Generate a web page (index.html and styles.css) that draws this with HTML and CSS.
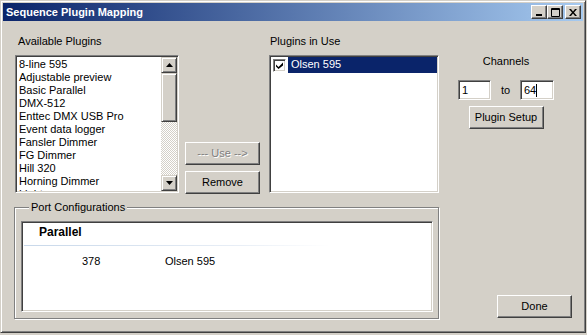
FILE: index.html
```html
<!doctype html>
<html>
<head>
    <title>Sequence Plugin Mapping</title>
    <meta charset="utf-8">
    <link rel="stylesheet" href="styles.css">
</head><body>
<div class="window">
    <div class="titlebar">
        <span class="title">Sequence Plugin Mapping</span>
        <div class="caption-buttons">
            <span class="cap-btn"><svg width="8" height="7" viewBox="0 0 8 7"><rect x="1" y="5" width="6" height="2" fill="#000"/></svg></span>
            <span class="cap-btn"><svg width="9" height="9" viewBox="0 0 9 9"><path d="M0.5 0.5h8v8h-8z M0.5 1.5h8" fill="none" stroke="#000"/></svg></span>
            <span class="cap-btn close"><svg width="8" height="7" viewBox="0 0 8 7"><path d="M0 0h2l2 2.5 2-2.5h2l-3 3.5 3 3.5h-2l-2-2.5-2 2.5h-2l3-3.5z" fill="#000"/></svg></span>
        </div>
    </div>

    <div class="client">
        <div class="top-row">
            <div class="col col-available">
                <div class="label">Available Plugins</div>
                <div class="listbox">
                    <ul class="items">
                        <li>8-line 595</li>
                        <li>Adjustable preview</li>
                        <li>Basic Parallel</li>
                        <li>DMX-512</li>
                        <li>Enttec DMX USB Pro</li>
                        <li>Event data logger</li>
                        <li>Fansler Dimmer</li>
                        <li>FG Dimmer</li>
                        <li>Hill 320</li>
                        <li>Horning Dimmer</li>
                        <li>Lightorama</li>
                    </ul>
                    <div class="vscroll">
                        <span class="sb-btn"><svg width="7" height="4" viewBox="0 0 7 4"><path d="M3.5 0L7 4H0z" fill="#000"/></svg></span>
                        <div class="sb-track"><span class="sb-thumb"></span></div>
                        <span class="sb-btn"><svg width="7" height="4" viewBox="0 0 7 4"><path d="M0 0h7L3.5 4z" fill="#000"/></svg></span>
                    </div>
                </div>
            </div>

            <div class="col col-actions">
                <button class="btn" disabled>--- Use --&gt;</button>
                <button class="btn">Remove</button>
            </div>

            <div class="col col-inuse">
                <div class="label">Plugins in Use</div>
                <div class="listbox">
                    <ul class="items checked-items">
                        <li class="check-row">
                            <span class="checkbox"><svg width="7" height="7" viewBox="0 0 7 7"><path d="M0 2.5L2.5 5 7 0.5V3.5L2.5 7 0 4.5z" fill="#000"/></svg></span>
                            <span class="check-text selected">Olsen 595</span>
                        </li>
                    </ul>
                </div>
            </div>

            <div class="col col-channels">
                <div class="label">Channels</div>
                <div class="range">
                    <span class="field">1</span>
                    <span class="to">to</span>
                    <span class="field">64<span class="caret"></span></span>
                </div>
                <button class="btn">Plugin Setup</button>
            </div>
        </div>

        <div class="bottom-row">
            <fieldset class="group">
                <legend>Port Configurations</legend>
                <div class="portlist">
                    <div class="group-head">Parallel</div>
                    <div class="group-line"></div>
                    <div class="port-row">
                        <span class="port-addr">378</span>
                        <span class="port-name">Olsen 595</span>
                    </div>
                </div>
            </fieldset>
            <button class="btn done">Done</button>
        </div>
    </div>
</div>
</body></html>
```

FILE: styles.css
```css
body {
    margin: 0;
    background: #d4d0c8;
    font: 11px/13px 'Liberation Sans', Arial, sans-serif;
    color: #000;
}

.window {
    box-sizing: border-box;
    width: 586px;
    height: 333px;
    padding: 1px;
    background: #d4d0c8;
    border: 1px solid;
    border-color: #d4d0c8 #404040 #404040 #d4d0c8;
    box-shadow: inset 1px 1px 0 #fff, inset -1px -1px 0 #808080;
    display: flex;
    flex-direction: column;
}

.titlebar {
    height: 18px;
    margin: 1px 1px 0 1px;
    display: flex;
    align-items: center;
    justify-content: space-between;
    padding: 0 2px 0 3px;
    background: linear-gradient(to right, #0a246a, #a6caf0);
}

.title {
    color: #fff;
    font-weight: bold;
    font-size: 11px;
    padding-top: 1px;
}

.caption-buttons {
    display: flex;
}

.cap-btn {
    box-sizing: border-box;
    width: 16px;
    height: 14px;
    display: flex;
    align-items: center;
    justify-content: center;
    background: #d4d0c8;
    border: 1px solid;
    border-color: #fff #404040 #404040 #fff;
    box-shadow: inset -1px -1px 0 #808080;
}

.cap-btn.close {
    margin-left: 2px;
}

.client {
    flex: 1;
    padding: 14px 12px 0 12px;
}

.top-row {
    display: flex;
    padding-left: 1px;
    height: 158px;
}

.col-available {
    width: 164px;
}

.col-actions {
    width: 75px;
    margin-left: 6px;
    display: flex;
    flex-direction: column;
    justify-content: flex-end;
    gap: 6px;
    margin-bottom: -1px;
}

.col-inuse {
    width: 170px;
    margin-left: 9px;
}

.col-channels {
    width: 96px;
    margin-left: 19px;
    padding-top: 20px;
    display: flex;
    flex-direction: column;
    align-items: center;
}

.label {
    height: 13px;
    margin: 0 0 7px 3px;
}

.col-inuse .label {
    margin-left: 1px;
}

.col-channels .label {
    margin: 0 0 12px 0;
}

.listbox {
    box-sizing: border-box;
    height: 138px;
    display: flex;
    background: #fff;
    border: 1px solid;
    border-color: #808080 #fff #fff #808080;
    box-shadow: inset 1px 1px 0 #404040, inset -1px -1px 0 #d4d0c8;
    padding: 1px;
    overflow: hidden;
}

.items {
    flex: 1;
    list-style: none;
    margin: 0;
    padding: 1px 0 0 2px;
    overflow: hidden;
}

.items li {
    height: 13px;
    white-space: nowrap;
}

.vscroll {
    width: 16px;
    display: flex;
    flex-direction: column;
}

.sb-btn,
.sb-thumb {
    box-sizing: border-box;
    display: flex;
    align-items: center;
    justify-content: center;
    background: #d4d0c8;
    border: 1px solid;
    border-color: #d4d0c8 #404040 #404040 #d4d0c8;
    box-shadow: inset 1px 1px 0 #fff, inset -1px -1px 0 #808080;
}

.sb-btn {
    height: 16px;
}

.sb-track {
    flex: 1;
    background: repeating-conic-gradient(#fff 0 25%, #d4d0c8 0 50%) 0 0 / 2px 2px;
}

.sb-thumb {
    height: 49px;
}

.checked-items {
    padding: 0;
}

.items .check-row {
    height: 16px;
    display: flex;
    align-items: center;
}

.checkbox {
    box-sizing: border-box;
    width: 13px;
    height: 13px;
    margin: 0 2px 0 2px;
    display: flex;
    align-items: center;
    justify-content: center;
    background: #fff;
    border: 1px solid;
    border-color: #808080 #fff #fff #808080;
    box-shadow: inset 1px 1px 0 #404040, inset -1px -1px 0 #d4d0c8;
}

.check-text {
    flex: 1;
    height: 16px;
    line-height: 15px;
    padding-left: 3px;
}

.selected {
    background: #0a246a;
    color: #fff;
}

.range {
    width: 96px;
    display: flex;
    justify-content: space-between;
    align-items: center;
}

.field {
    box-sizing: border-box;
    width: 33px;
    height: 20px;
    padding: 3px 0 0 3px;
    background: #fff;
    border: 1px solid;
    border-color: #808080 #fff #fff #808080;
    box-shadow: inset 1px 1px 0 #404040, inset -1px -1px 0 #d4d0c8;
}

.field + .to + .field {
    width: 34px;
}

.caret {
    display: inline-block;
    width: 1px;
    height: 13px;
    background: #000;
    vertical-align: -3px;
}

.btn {
    box-sizing: border-box;
    width: 75px;
    height: 23px;
    padding: 0;
    font: 11px/13px 'Liberation Sans', Arial, sans-serif;
    color: #000;
    background: #d4d0c8;
    border: 1px solid;
    border-color: #fff #404040 #404040 #fff;
    box-shadow: inset -1px -1px 0 #808080;
}

.btn:disabled {
    color: #808080;
    text-shadow: 1px 1px 0 #fff;
}

.col-channels .btn {
    margin-top: 6px;
}

.bottom-row {
    margin-top: 8px;
    display: flex;
    justify-content: space-between;
    align-items: flex-end;
}

.group {
    box-sizing: border-box;
    width: 425px;
    margin: 0;
    padding: 7px 5px 6px 6px;
    border: 1px solid #808080;
    box-shadow: 1px 1px 0 #fff, inset 1px 1px 0 #fff;
}

.group legend {
    padding: 0 2px;
    margin-left: 8px;
    background: #d4d0c8;
}

.portlist {
    box-sizing: border-box;
    height: 91px;
    background: #fff;
    border: 1px solid;
    border-color: #808080 #fff #fff #808080;
    box-shadow: inset 1px 1px 0 #404040, inset -1px -1px 0 #d4d0c8;
    padding: 2px;
}

.group-head {
    font-weight: bold;
    font-size: 12px;
    padding: 1px 0 0 15px;
    height: 20px;
    line-height: 15px;
}

.group-line {
    height: 1px;
    margin-right: 100px;
    background: linear-gradient(to right, #c8d8ea, #e8eef6 70%, #fff);
}

.port-row {
    padding-top: 9px;
    display: flex;
}

.port-addr {
    width: 83px;
    padding-left: 58px;
}

.done {
    margin-bottom: 1px;
}
```
